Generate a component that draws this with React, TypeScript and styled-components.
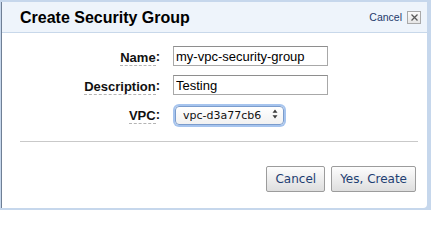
import styled, { createGlobalStyle } from "styled-components";

const GlobalStyle = createGlobalStyle`
  html, body {
    margin: 0;
    padding: 0;
    background: #ffffff;
  }
  body {
    width: 431px;
    height: 210px;
    overflow: hidden;
  }
`;

interface Field {
  label: string;
  value: string;
}

const fields: Array<Field> = [
  { label: "Name", value: "my-vpc-security-group" },
  { label: "Description", value: "Testing" },
];

export default function App(): JSX.Element {
  return (
    <>
      <GlobalStyle />
      <Frame>
        <Dialog>
          <Header>
            <Title>Create Security Group</Title>
            <HeaderCancel href="#">Cancel</HeaderCancel>
            <CloseBox aria-label="Close">
              <svg width="7" height="7" viewBox="0 0 7 7">
                <path d="M0.5 0.5 L6.5 6.5 M6.5 0.5 L0.5 6.5" stroke="#5a5a5a" strokeWidth="1.3" />
              </svg>
            </CloseBox>
          </Header>

          <Form>
            {fields.map((field) => (
              <Row key={field.label}>
                <Label>
                  <Term>{field.label}</Term>:
                </Label>
                <TextInput defaultValue={field.value} />
              </Row>
            ))}
            <Row>
              <Label>
                <Term>VPC</Term>:
              </Label>
              <SelectWrap>
                <Select defaultValue="vpc-d3a77cb6">
                  <option value="vpc-d3a77cb6">vpc-d3a77cb6</option>
                </Select>
                <Arrows width="6" height="10" viewBox="0 0 6 10">
                  <path d="M3 0.5 L5.5 3.8 L0.5 3.8 Z M3 9.5 L5.5 6.2 L0.5 6.2 Z" fill="#3c3c3c" />
                </Arrows>
              </SelectWrap>
            </Row>
          </Form>

          <Divider />

          <Footer>
            <Button>Cancel</Button>
            <Button>Yes, Create</Button>
          </Footer>
        </Dialog>
      </Frame>
    </>
  );
}

const Frame = styled.div`
  box-sizing: border-box;
  width: 431px;
  height: 210px;
  padding: 2px 4px 2px 1px;
  background: #c6d7ec;
  display: flex;
`;

const Dialog = styled.div`
  flex: 1;
  display: flex;
  flex-direction: column;
  background: #ffffff;
  border-left: 1px solid #6f7f95;
  border-bottom-right-radius: 4px;
  overflow: hidden;
`;

const Header = styled.div`
  display: flex;
  align-items: center;
  height: 30px;
  padding: 0 6px 0 18px;
  background: #eef4fb;
  border-bottom: 1px solid #c8d8ea;
`;

const Title = styled.h1`
  flex: 1;
  margin: 0;
  padding-top: 1px;
  font-family: "Liberation Sans", Arial, sans-serif;
  font-size: 16px;
  font-weight: bold;
  color: #000000;
`;

const HeaderCancel = styled.a`
  margin-right: 5px;
  font-family: "Liberation Sans", Arial, sans-serif;
  font-size: 10.5px;
  color: #1d3a6b;
  text-decoration: none;
`;

const CloseBox = styled.span`
  box-sizing: border-box;
  width: 14px;
  height: 13px;
  display: flex;
  align-items: center;
  justify-content: center;
  border: 1px solid #a9a9a9;
  background: linear-gradient(#fbfbfb, #e6e6e6);
`;

const Form = styled.div`
  display: grid;
  grid-template-columns: 158px auto;
  column-gap: 13px;
  row-gap: 9px;
  padding-top: 13px;
`;

const Row = styled.div`
  display: contents;
`;

const Label = styled.div`
  display: flex;
  align-items: center;
  justify-content: flex-end;
  height: 20px;
  font-family: "Liberation Sans", Arial, sans-serif;
  font-size: 13px;
  font-weight: bold;
  color: #111111;
`;

const Term = styled.span`
  border-bottom: 1px dashed #b4b4b4;
  line-height: 15px;
  margin-top: 3px;
`;

const TextInput = styled.input`
  box-sizing: border-box;
  width: 155px;
  height: 20px;
  margin: 0;
  padding: 0 2px;
  border: 1px solid #a8a8a8;
  border-top-color: #8e8e8e;
  font-family: "Liberation Sans", Arial, sans-serif;
  font-size: 13px;
  color: #000000;
  outline: none;
`;

const SelectWrap = styled.span`
  position: relative;
  align-self: center;
  width: 109px;
  height: 19px;
  margin-left: 2px;
`;

const Select = styled.select`
  appearance: none;
  box-sizing: border-box;
  width: 109px;
  height: 19px;
  margin: 0;
  padding: 0 0 0 7px;
  border: 1px solid #7b9ccc;
  border-radius: 4px;
  background: linear-gradient(#ffffff, #f1f1f1);
  box-shadow: 0 0 0 2px #a6c4ee;
  font-family: "DejaVu Sans", Verdana, sans-serif;
  font-size: 11px;
  color: #111111;
  outline: none;
`;

const Arrows = styled.svg`
  position: absolute;
  right: 6px;
  top: 4px;
  pointer-events: none;
`;

const Divider = styled.div`
  height: 1px;
  margin: 17px 9px 0 18px;
  background: #c9c9c9;
`;

const Footer = styled.div`
  display: flex;
  justify-content: flex-end;
  gap: 6px;
  margin-top: 24px;
  padding-right: 11px;
`;

const Button = styled.button`
  box-sizing: border-box;
  height: 26px;
  margin: 0;
  padding: 0 8px;
  border: 1px solid #9c9c9c;
  border-radius: 2px;
  background: linear-gradient(#fdfdfd, #dedede);
  font-family: "DejaVu Sans", Verdana, sans-serif;
  font-size: 12px;
  color: #1e3e72;
`;
